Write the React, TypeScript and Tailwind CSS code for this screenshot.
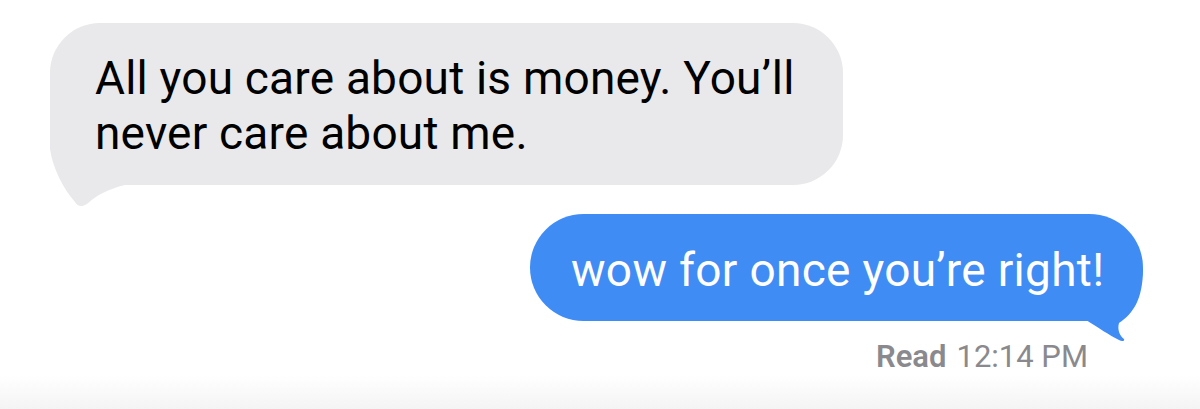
import React from "react";

const font = { fontFamily: "Roboto, 'Noto Sans', sans-serif" };

const Incoming: React.FC<{ children: React.ReactNode }> = ({ children }) => (
  <div className="relative ml-[50px] w-[793px] rounded-[50px] bg-[#e9e9eb] pl-[45px] pr-[40px] pt-[28px] pb-[24px]">
    {/* tail, bottom left */}
    <svg
      className="absolute left-0 top-[100px]"
      width="80"
      height="90"
      viewBox="0 100 80 90"
    >
      <path
        d="M0 110 L0 126 C3 146 13 165 25 179 C28 184 32 184 37 181 C47 172 58 166 75 162 L75 110 Z"
        fill="#e9e9eb"
      />
    </svg>
    <p className="relative text-[46px] leading-[55px] tracking-[0.2px] text-black">{children}</p>
  </div>
);

const Outgoing: React.FC<{ children: React.ReactNode }> = ({ children }) => (
  <div className="relative ml-[530px] w-[613px] rounded-[54px] bg-[#3f8cf5] pl-[41px] pt-[29px] pb-[23px]">
    {/* tail, bottom right */}
    <svg
      className="absolute left-[540px] top-[50px]"
      width="80"
      height="80"
      viewBox="540 50 80 80"
    >
      <path
        d="M613 55 C613 85 603 100 589 109 C587 116 590 122 594 125 C595 127 592 128 589 126 C579 121 569 114 556 106 L556 55 Z"
        fill="#3f8cf5"
      />
    </svg>
    <p className="relative text-[46px] leading-[55px] tracking-[0.3px] text-white">{children}</p>
  </div>
);

export default function App() {
  return (
    <div className="flex h-[409px] w-[1200px] flex-col overflow-hidden bg-white" style={font}>
      <div className="h-[24px]" />
      <Incoming>
        All you care about is money. You’ll
        <br />
        never care about me.
      </Incoming>
      <div className="h-[30px]" />
      <Outgoing>wow for once you’re right!</Outgoing>
      <div className="mt-[17px] mr-[112px] flex justify-end gap-[10px] text-[31px] leading-[37px] text-[#8a8a8e]">
        <span className="font-semibold">Read</span>
        <span>12:14 PM</span>
      </div>
      <div className="mt-auto h-[36px] bg-gradient-to-b from-white to-[#f4f4f4]" />
    </div>
  );
}
